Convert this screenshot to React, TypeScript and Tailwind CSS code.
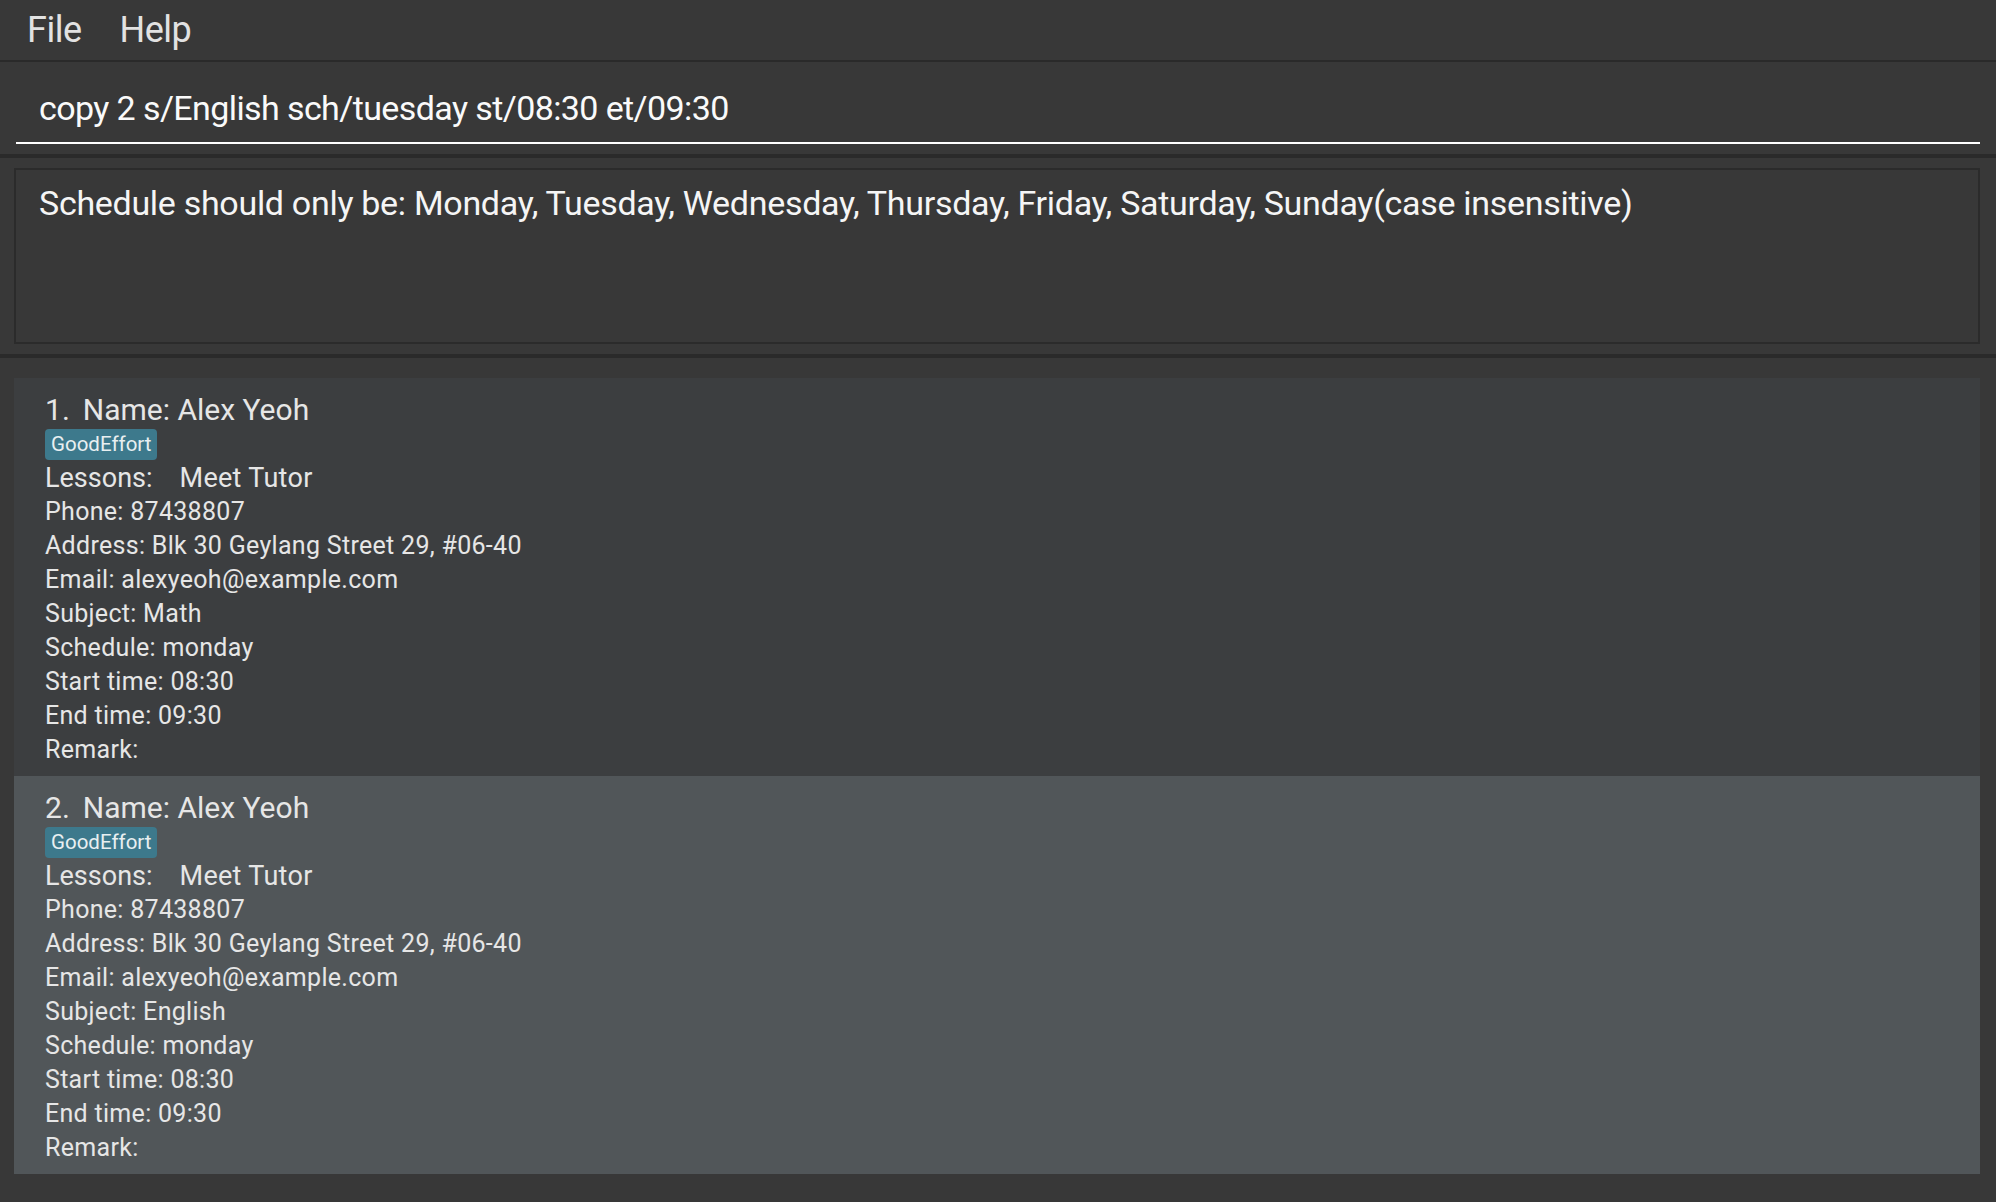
import React from 'react';

interface Student {
  id: number;
  name: string;
  tags: string[];
  lessons: string;
  phone: string;
  address: string;
  email: string;
  subject: string;
  schedule: string;
  startTime: string;
  endTime: string;
  remark: string;
}

const students: Student[] = [
  {
    id: 1,
    name: 'Alex Yeoh',
    tags: ['GoodEffort'],
    lessons: 'Meet Tutor',
    phone: '87438807',
    address: 'Blk 30 Geylang Street 29, #06-40',
    email: 'alexyeoh@example.com',
    subject: 'Math',
    schedule: 'monday',
    startTime: '08:30',
    endTime: '09:30',
    remark: '',
  },
  {
    id: 2,
    name: 'Alex Yeoh',
    tags: ['GoodEffort'],
    lessons: 'Meet Tutor',
    phone: '87438807',
    address: 'Blk 30 Geylang Street 29, #06-40',
    email: 'alexyeoh@example.com',
    subject: 'English',
    schedule: 'monday',
    startTime: '08:30',
    endTime: '09:30',
    remark: '',
  },
];

function StudentCard({ student, odd }: { student: Student; odd: boolean }) {
  const details = [
    `Phone: ${student.phone}`,
    `Address: ${student.address}`,
    `Email: ${student.email}`,
    `Subject: ${student.subject}`,
    `Schedule: ${student.schedule}`,
    `Start time: ${student.startTime}`,
    `End time: ${student.endTime}`,
    `Remark: ${student.remark}`,
  ];

  return (
    <div className={`h-[398px] pl-[31px] pt-[14px] text-[#e6e6e6] ${odd ? 'bg-[#3c3e40]' : 'bg-[#515659]'}`}>
      <div className="flex gap-[13px] text-[30px] leading-[36px]">
        <span>{student.id}.</span>
        <span>Name: {student.name}</span>
      </div>
      <div className="flex gap-2 mt-[1px]">
        {student.tags.map((tag) => (
          <span
            key={tag}
            className="h-[31px] px-[6px] rounded-[4px] bg-[#3d798c] text-[#e8eff1] text-[20.5px] leading-[31px]"
          >
            {tag}
          </span>
        ))}
      </div>
      <div className="flex gap-[27px] mt-[2px] text-[27px] leading-[33px]">
        <span>Lessons:</span>
        <span className="tracking-[0.3px]">{student.lessons}</span>
      </div>
      <div className="text-[25px] leading-[34px] tracking-[0.3px]">
        {details.map((line, idx) => (
          <p key={idx}>{line}</p>
        ))}
      </div>
    </div>
  );
}

export default function App() {
  return (
    <div
      className="w-full h-[1202px] bg-[#383838] flex flex-col overflow-hidden"
      style={{ fontFamily: 'Roboto, "Liberation Sans", sans-serif' }}
    >
      {/* Menu bar */}
      <div className="h-[60px] flex items-center gap-[38px] px-[27px] text-[36px] tracking-[-0.5px] text-[#e2e2e2]">
        <span>File</span>
        <span>Help</span>
      </div>
      <div className="h-[2px] bg-[#2a2a2a]" />

      {/* Command box */}
      <div className="pt-[26px] pb-[10px] pl-[16px] pr-[16px]">
        <div className="border-b-2 border-white pl-[23px] pb-[14px] text-[34px] leading-[40px] tracking-[-0.6px] text-[#fafafa]">
          copy 2 s/English sch/tuesday st/08:30 et/09:30
        </div>
      </div>
      <div className="h-[4px] bg-[#2a2a2a]" />

      {/* Result display */}
      <div className="pt-[10px] pb-[10px] pl-[14px] pr-[16px]">
        <div className="h-[176px] border-2 border-[#2b2b2b] pl-[23px] pt-[13px] text-[34px] leading-[40px] tracking-[-0.3px] text-[#f5f5f5]">
          Schedule should only be: Monday, Tuesday, Wednesday, Thursday, Friday, Saturday, Sunday(case insensitive)
        </div>
      </div>
      <div className="h-[4px] bg-[#2a2a2a]" />

      {/* Student list */}
      <div className="flex-1 pt-[20px] pl-[14px] pr-[16px]">
        {students.map((s, idx) => (
          <StudentCard key={s.id} student={s} odd={idx % 2 === 0} />
        ))}
      </div>
    </div>
  );
}
